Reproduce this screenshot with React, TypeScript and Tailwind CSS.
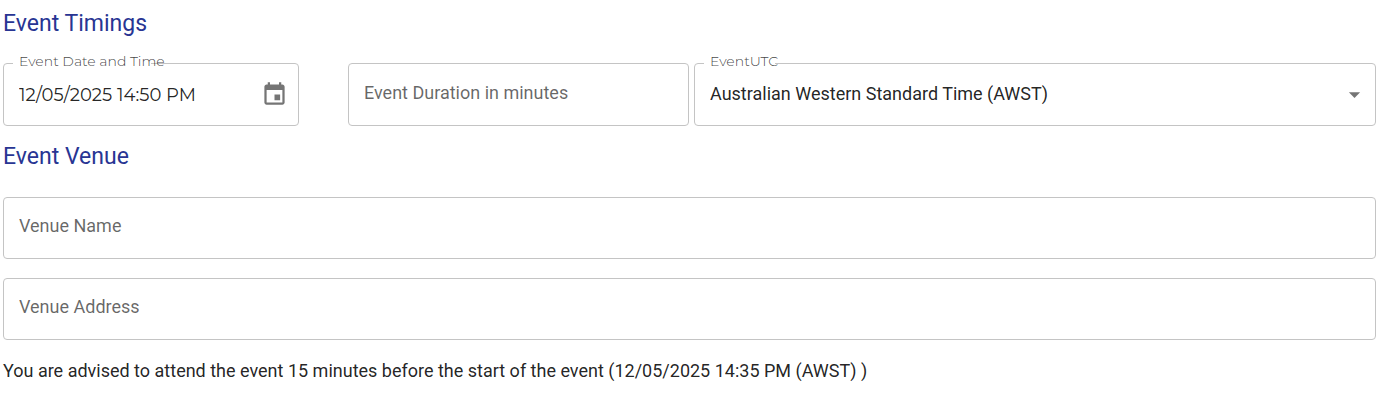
import type { ReactNode } from "react"

const timezones = ["Australian Western Standard Time (AWST)"]

const venueFields = [
  { id: "venue-name", label: "Venue Name" },
  { id: "venue-address", label: "Venue Address" },
]

const inputClass =
  "w-full px-[15px] rounded border border-[#c4c4c4] bg-white text-lg text-black/87 outline-none placeholder:text-black/60 placeholder:opacity-100 focus:border-[#2a3180]"

function SectionTitle({ children }: { children: ReactNode }) {
  return <h2 className="text-[23px] leading-8 text-[#283593]">{children}</h2>
}

type OutlinedProps = {
  id: string
  label: string
  className: string
  children: ReactNode
}

function Outlined({ id, label, className, children }: OutlinedProps) {
  return (
    <div className={`relative ${className}`}>
      {children}
      {/* the notch is sized by the label set in the body font, so it can be shorter than the label */}
      <label
        htmlFor={id}
        data-label={label}
        className="absolute left-[10px] -top-3 pl-[6px] font-[Montserrat,Inter,sans-serif] font-light text-sm leading-5 text-black/75 whitespace-nowrap before:content-[attr(data-label)] before:absolute before:inset-y-0 before:left-0 before:px-[5px] before:bg-white before:font-[Roboto,sans-serif] before:font-normal before:text-transparent"
      >
        <span className="relative">{label}</span>
      </label>
    </div>
  )
}

export default function App() {
  return (
    <form className="pl-[3px] pr-4 pt-2 bg-white font-[Roboto,sans-serif] text-black/87">
      <SectionTitle>Event Timings</SectionTitle>
      <div className="flex mt-[23px]">
        <Outlined id="event-date" label="Event Date and Time" className="w-[296px] mr-[49px] shrink-0">
          <input
            id="event-date"
            type="text"
            defaultValue="12/05/2025 14:50 PM"
            className={`${inputClass} h-[63px] font-[Montserrat,Inter,sans-serif]`}
          />
          <button type="button" aria-label="Choose date" className="absolute right-[11px] top-[18px] text-black/54">
            <svg width="27" height="27" viewBox="0 0 24 24" fill="currentColor">
              <path d="M17 12h-5v5h5v-5zM16 1v2H8V1H6v2H5c-1.110 0-1.990.9-1.990 2L3 19c0 1.100.89 2 2 2h14c1.100 0 2-.9 2-2V5c0-1.100-.9-2-2-2h-1V1h-2zm3 18H5V8h14v11z" />
            </svg>
          </button>
        </Outlined>
        <div className="flex flex-1 gap-[5px]">
          <div className="flex-1 min-w-0">
            <input
              id="event-duration"
              aria-label="Event Duration in minutes"
              placeholder="Event Duration in minutes"
              className={`${inputClass} h-[63px] pb-1`}
            />
          </div>
          <Outlined id="event-utc" label="EventUTC" className="flex-2 min-w-0">
            <select id="event-utc" className={`${inputClass} h-[63px] pb-[2px] appearance-none`}>
              {timezones.map((zone) => (
                <option key={zone}>{zone}</option>
              ))}
            </select>
            <svg
              width="27"
              height="27"
              viewBox="0 0 24 24"
              className="absolute right-2 top-[18px] pointer-events-none fill-black/54"
            >
              <path d="M7 10l5 5 5-5z" />
            </svg>
          </Outlined>
        </div>
      </div>
      <div className="mt-[15px]">
        <SectionTitle>Event Venue</SectionTitle>
      </div>
      <div className="flex flex-col gap-[19px] mt-6">
        {venueFields.map((field) => (
          <input
            key={field.id}
            id={field.id}
            aria-label={field.label}
            placeholder={field.label}
            className={`${inputClass} h-[62px] pb-[6px]`}
          />
        ))}
      </div>
      <p className="mt-[17px] text-lg leading-7">
        You are advised to attend the event 15 minutes before the start of the event (12/05/2025 14:35 PM (AWST) )
      </p>
    </form>
  )
}
